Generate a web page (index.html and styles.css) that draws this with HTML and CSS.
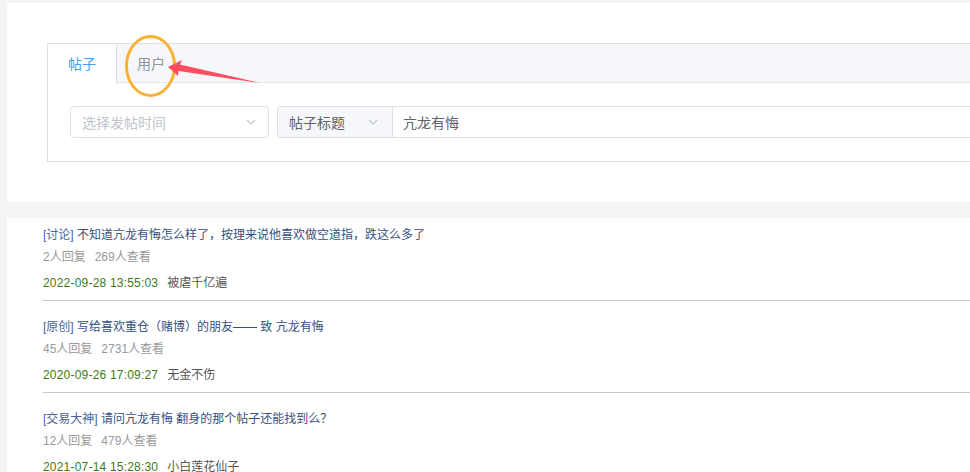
FILE: index.html
```html
<!DOCTYPE html>
<html lang="zh-CN">
<head>
  <meta charset="UTF-8" />
  <title>搜索</title>
  <link rel="stylesheet" href="styles.css">
</head>
<body>
  <!-- search panel -->
  <section class="panel search-panel">
    <div class="tab-card">
      <div class="tab-header">
        <div class="tab active">帖子</div>
        <div class="tab">用户</div>
      </div>
      <div class="tab-body">
        <div class="select date-select">
          <span class="placeholder">选择发帖时间</span>
          <svg class="chevron" width="10" height="6" viewBox="0 0 10 6"><path d="M1 1l4 4 4-4" fill="none" stroke="#c0c4cc" stroke-width="1.2"/></svg>
        </div>
        <div class="input-group">
          <div class="prepend">
            <span>帖子标题</span>
            <svg class="chevron" width="10" height="6" viewBox="0 0 10 6"><path d="M1 1l4 4 4-4" fill="none" stroke="#c0c4cc" stroke-width="1.2"/></svg>
          </div>
          <div class="query">亢龙有悔</div>
        </div>
      </div>
    </div>
  </section>

  <!-- result list -->
  <section class="panel results">
    <div class="post">
      <div class="post-title"><span class="tag">[讨论]</span> 不知道亢龙有悔怎么样了，按理来说他喜欢做空道指，跌这么多了</div>
      <div class="post-meta"><span>2人回复</span><span>269人查看</span></div>
      <div class="post-info"><span class="date">2022-09-28 13:55:03</span><span class="author">被虐千亿遍</span></div>
    </div>
    <div class="post">
      <div class="post-title"><span class="tag">[原创]</span> 写给喜欢重仓（赌博）的朋友—— 致 亢龙有悔</div>
      <div class="post-meta"><span>45人回复</span><span>2731人查看</span></div>
      <div class="post-info"><span class="date">2020-09-26 17:09:27</span><span class="author">无金不伤</span></div>
    </div>
    <div class="post">
      <div class="post-title"><span class="tag">[交易大神]</span> 请问亢龙有悔 翻身的那个帖子还能找到么？</div>
      <div class="post-meta"><span>12人回复</span><span>479人查看</span></div>
      <div class="post-info"><span class="date">2021-07-14 15:28:30</span><span class="author">小白莲花仙子</span></div>
    </div>
  </section>

  <!-- screenshot annotation -->
  <svg class="annotation" width="970" height="472" viewBox="0 0 970 472">
    <ellipse cx="150.5" cy="66" rx="24" ry="29.5" fill="none" stroke="#f9b233" stroke-width="3"/>
    <polygon points="168,67 182,60 180,64.5 260,83 178.5,71 178,76" fill="#fd4d60"/>
  </svg>
</body>
</html>
```

FILE: styles.css
```css
* {
  margin: 0;
  padding: 0;
  box-sizing: border-box;
}

html, body {
  background: #f4f4f4;
  font-family: "Helvetica Neue", "Liberation Sans", "Noto Sans CJK SC", sans-serif;
  overflow: hidden;
}

body {
  width: 970px;
  height: 472px;
  position: relative;
}

.panel {
  background: #fff;
  margin-left: 7px;
  width: 1400px;
}

/* search panel */
.search-panel {
  margin-top: 3px;
  padding: 40px;
}

.tab-card {
  border: 1px solid #dcdfe6;
  width: 1200px;
}

.tab-header {
  display: flex;
  height: 39px;
  background: #f5f7fa;
  border-bottom: 1px solid #e4e7ed;
}

.tab {
  height: 39px;
  line-height: 40px;
  padding: 0 20px;
  font-size: 14px;
  color: #909399;
}

.tab.active {
  background: #fff;
  color: #409eff;
  height: 40px;
  border-right: 1px solid #dcdfe6;
}

.tab-body {
  display: flex;
  gap: 8px;
  padding: 23px 22px;
}

.select, .input-group {
  height: 32px;
  border: 1px solid #dcdfe6;
  border-radius: 4px;
  font-size: 14px;
  display: flex;
  align-items: center;
}

.date-select {
  width: 199px;
  padding: 0 12px 0 11px;
  justify-content: space-between;
}

.placeholder {
  color: #c0c4cc;
}

.chevron {
  display: block;
}

.input-group {
  width: 800px;
  overflow: hidden;
}

.prepend {
  width: 115px;
  height: 100%;
  background: #f5f7fa;
  border-right: 1px solid #dcdfe6;
  display: flex;
  align-items: center;
  justify-content: space-between;
  padding: 0 14px 0 11px;
  color: #606266;
}

.query {
  padding-left: 10px;
  color: #606266;
}

/* result list */
.results {
  margin-top: 16px;
  padding: 0 0 0 36px;
  height: 300px;
}

.post {
  padding: 15px 0 6px;
  border-bottom: 1px solid #cacaca;
  font-size: 12px;
  line-height: 22px;
}

.post:first-child {
  padding-top: 6px;
}

.post-title {
  color: #36507f;
}

.tag {
  color: #4d6595;
}

.post-meta {
  color: #999;
  display: flex;
  gap: 9px;
}

.post-info {
  margin-top: 4px;
  display: flex;
  gap: 9px;
}

.date {
  color: #3d7a14;
  letter-spacing: 0.2px;
}

.author {
  color: #555;
}

/* annotation over the screenshot */
.annotation {
  position: absolute;
  left: 0;
  top: 0;
  pointer-events: none;
}
```
